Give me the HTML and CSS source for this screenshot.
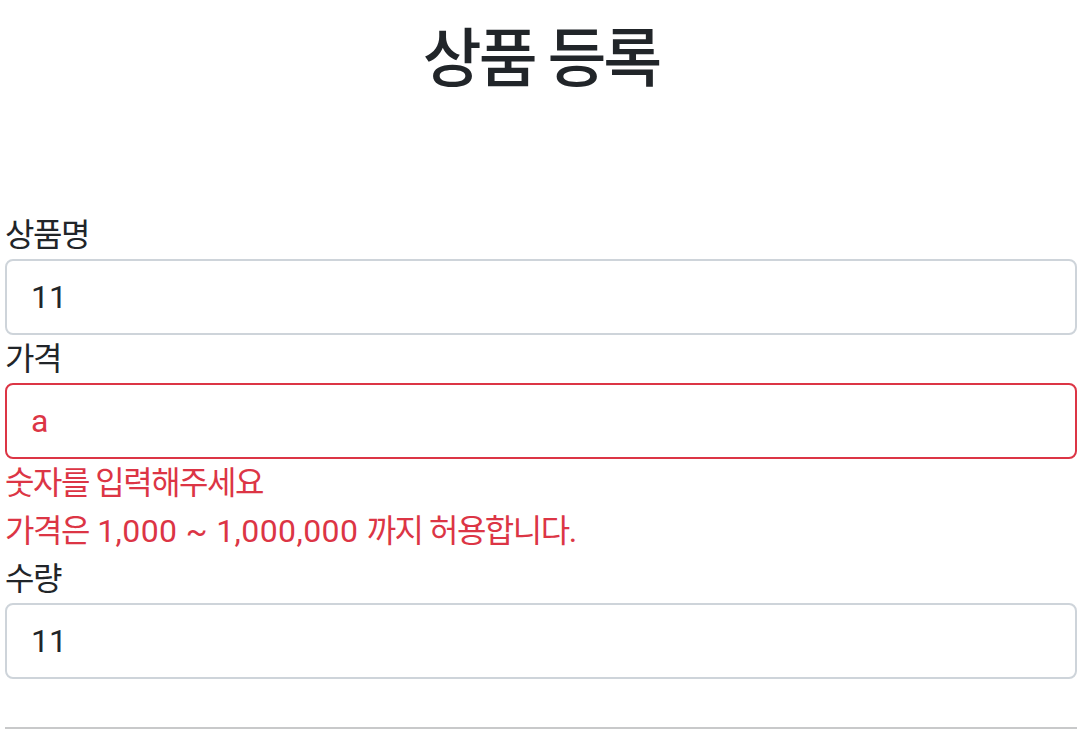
FILE: index.html
```html
<!DOCTYPE html>
<html lang="ko">
<head>
<meta charset="utf-8">
<title>상품 등록</title>
<link rel="stylesheet" href="styles.css">
</head>
<body>
<div class="container">
  <div class="page-header">
    <h2 class="title">상품 등록</h2>
  </div>
  <form class="item-form">
    <div class="field">
      <label class="label" for="itemName">상품명</label>
      <input class="input" id="itemName" type="text" value="11">
    </div>
    <div class="field">
      <label class="label" for="price">가격</label>
      <input class="input input-error" id="price" type="text" value="a">
      <div class="field-error">숫자를 입력해주세요</div>
      <div class="field-error">가격은<span class="num"> 1,000 ~ 1,000,000 </span>까지 허용합니다.</div>
    </div>
    <div class="field">
      <label class="label" for="quantity">수량</label>
      <input class="input" id="quantity" type="text" value="11">
    </div>
  </form>
  <hr class="divider">
</div>
</body>
</html>
```

FILE: styles.css
```css
html, body {
  margin: 0;
  padding: 0;
  background: #ffffff;
}
body {
  font-family: Roboto, "Noto Sans CJK KR", sans-serif;
  font-size: 32px;
  line-height: 1.5;
  color: #212529;
}
.container {
  padding: 0 7px 0 5px;
}
.page-header {
  padding: 22px 0 96px;
  text-align: center;
}
.title {
  margin: 0 0 16px;
  font-size: 64px;
  font-weight: 500;
  line-height: 1.2;
  letter-spacing: -3px;
}
.item-form {
  display: flex;
  flex-direction: column;
}
.field {
  display: flex;
  flex-direction: column;
}
.label {
  display: block;
  line-height: 48px;
  height: 48px;
  letter-spacing: -1.5px;
}
.input {
  box-sizing: border-box;
  display: block;
  width: 100%;
  height: 76px;
  margin: 0;
  padding: 0 24px;
  font-family: Roboto, "Noto Sans CJK KR", sans-serif;
  font-size: 32px;
  color: #212529;
  background: #fff;
  border: 2px solid #ced4da;
  border-radius: 8px;
  outline: none;
}
.input-error {
  border-color: #dc3545;
  color: #dc3545;
}
.field-error {
  color: #dc3545;
  line-height: 48px;
  height: 48px;
  letter-spacing: -1.5px;
}
.num {
  letter-spacing: 0.4px;
}
.divider {
  margin: 48px 0 0;
  border: 0;
  border-top: 2px solid #c8c9ca;
  height: 0;
}
```
